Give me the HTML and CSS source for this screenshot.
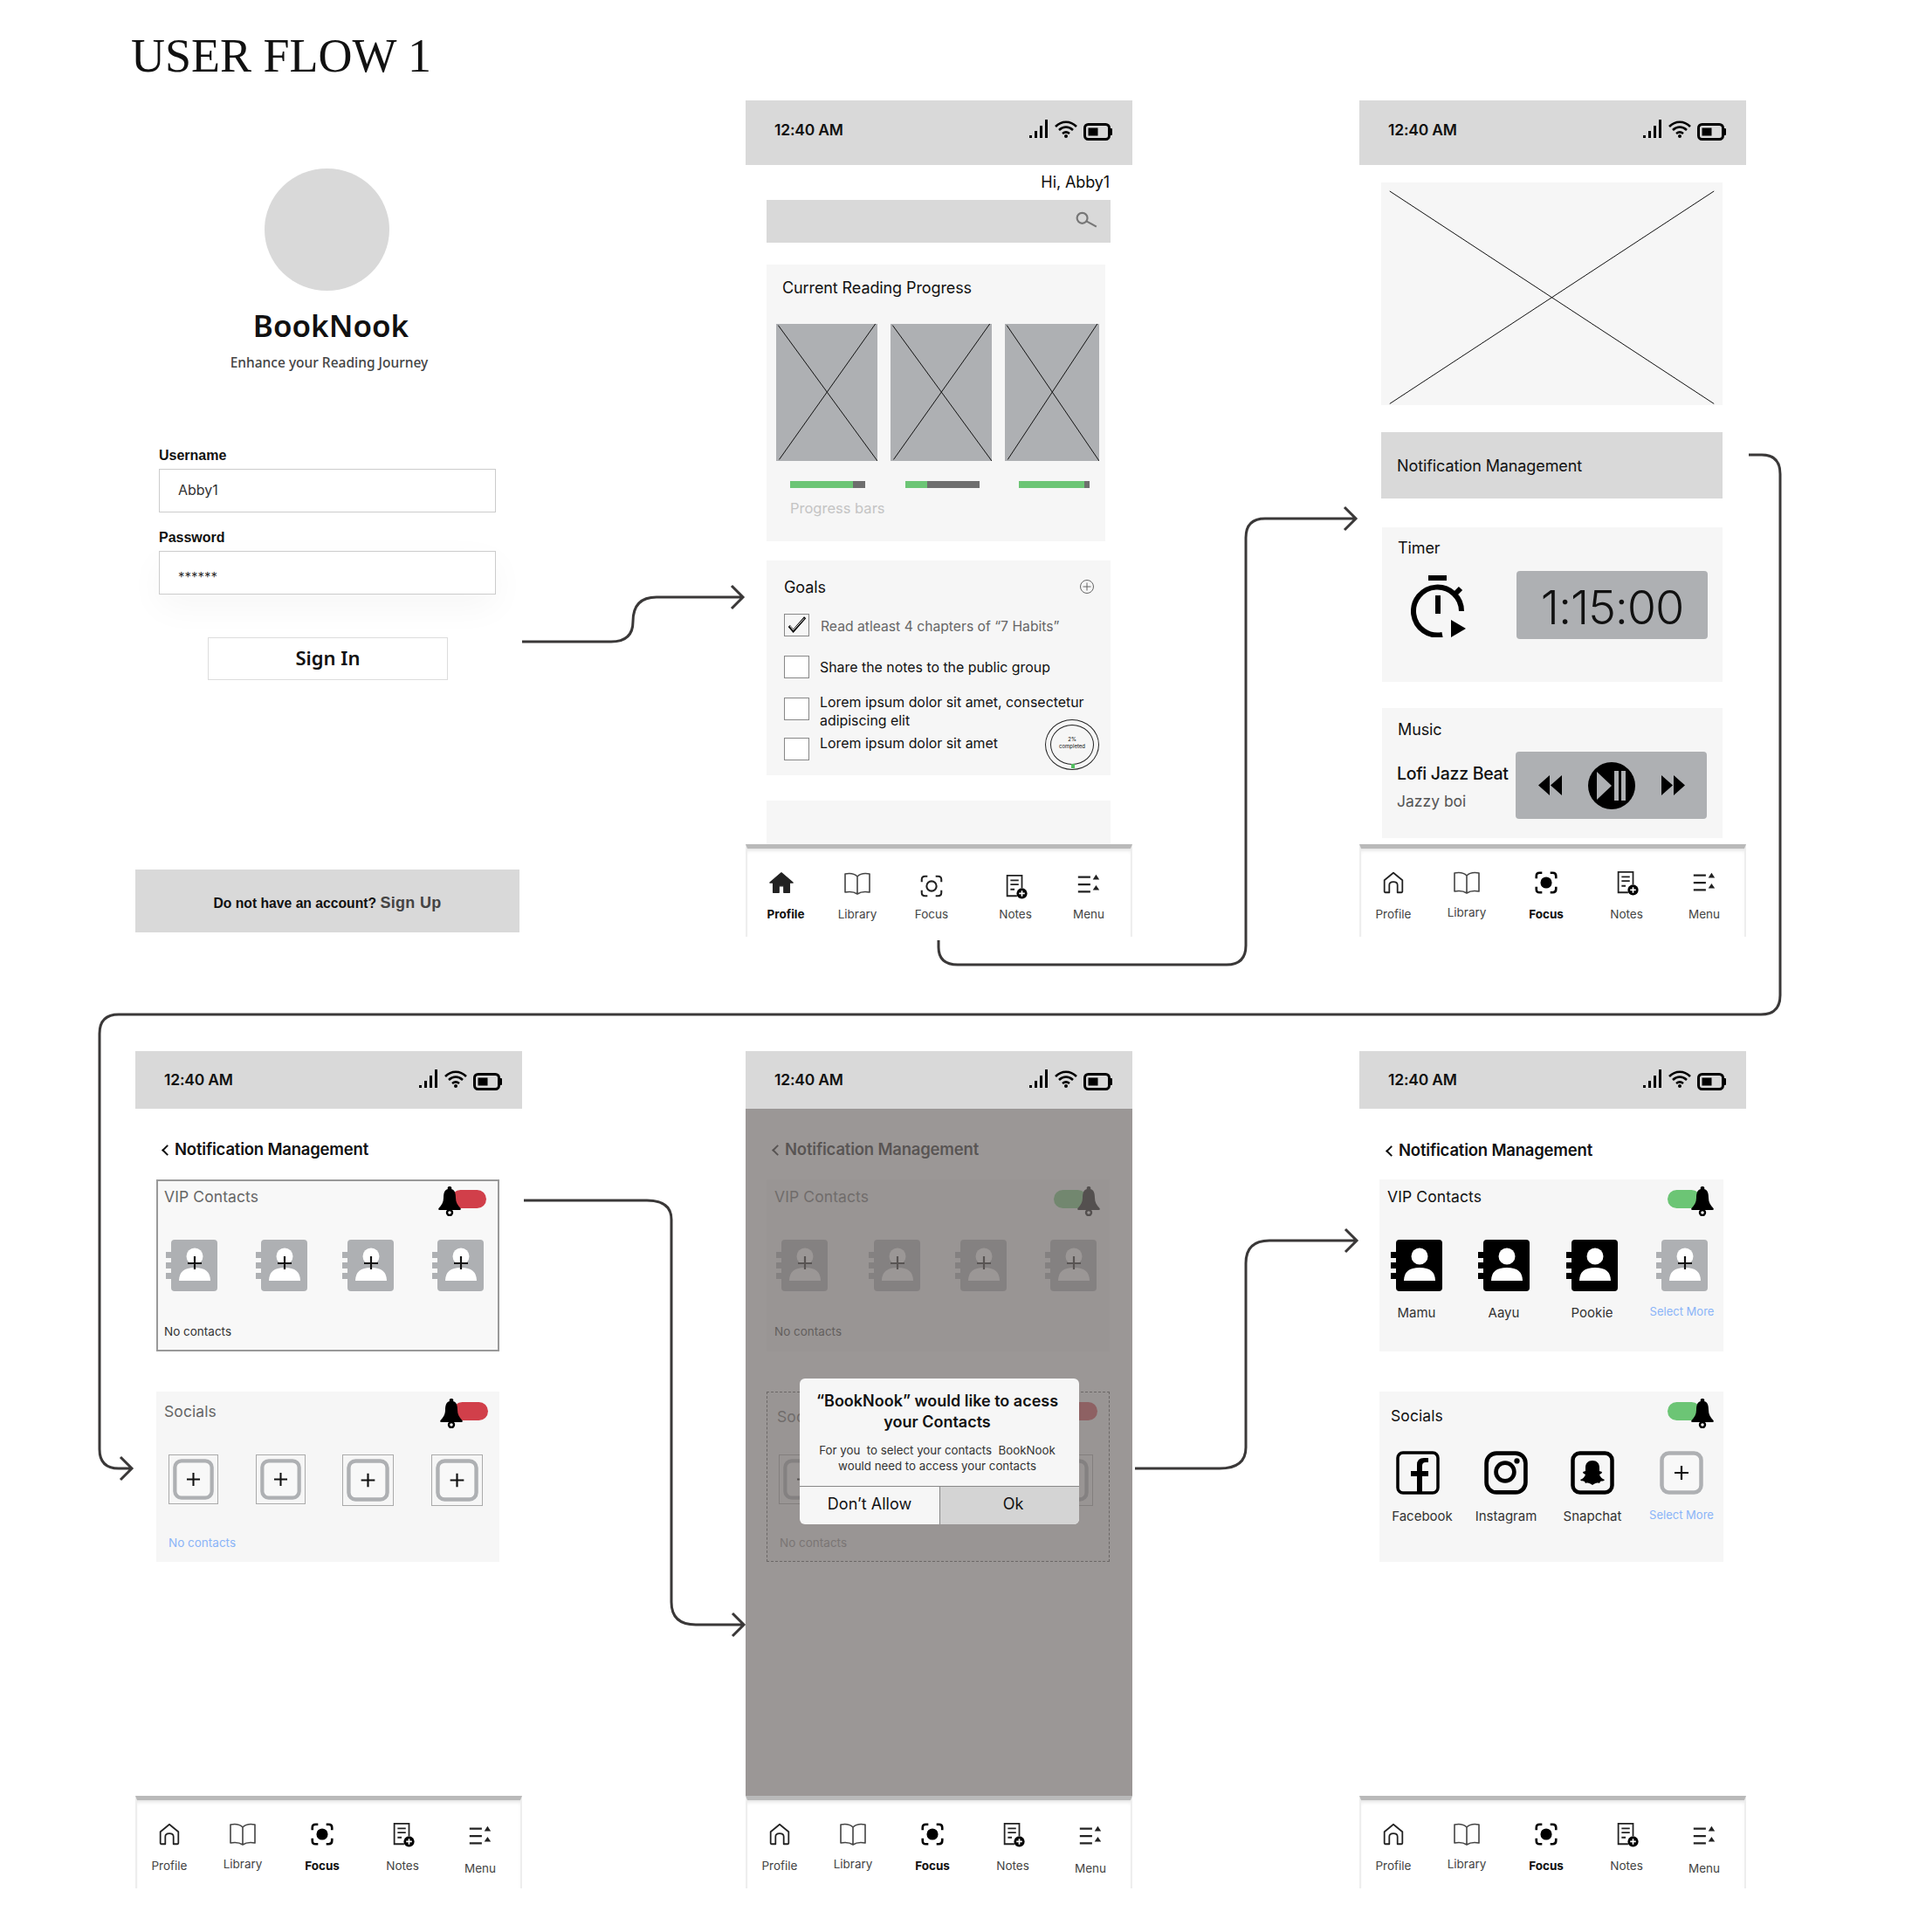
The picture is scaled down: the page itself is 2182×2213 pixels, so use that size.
FILE: index.html
```html
<!DOCTYPE html>
<html lang="en">
<head>
    <meta charset="UTF-8">
    <meta name="viewport" content="width=device-width, initial-scale=1.0">
    <title>User Flow 1</title>
    <link rel="stylesheet" href="styles.css">
</head>
<body>
<svg class="defs">
    <symbol id="signal" viewBox="0 0 22 22"><path d="M0 18h3v3H0zM6 13h3v8H6zM12 7h3v14h-3zM18 0h3v21h-3z"/></symbol>
    <symbol id="wifi" viewBox="0 0 26 20"><path d="M1 7c7-7 17-7 24 0M5 11c5-4.5 11-4.5 16 0M9 15c2.500-2 5.500-2 8 0" fill="none" stroke="#000" stroke-width="2.6"/><circle cx="13" cy="18" r="2"/></symbol>
    <symbol id="battery" viewBox="0 0 33 20"><rect x="1.5" y="1.5" width="28" height="17" rx="4" fill="none" stroke="#000" stroke-width="3"/><rect x="5.5" y="5.5" width="11" height="9"/><rect x="30" y="6" width="3" height="8" rx="1"/></symbol>
    <symbol id="home" viewBox="0 0 32 32"><path d="M5 27V13L16 4l11 9v14q0 1-1 1h-5v-9q0-4-5-4t-5 4v9H6q-1 0-1-1z" fill="none" stroke="#222" stroke-width="1.9" stroke-linejoin="round"/></symbol>
    <symbol id="home-fill" viewBox="0 0 32 32"><path d="M16 3l14 12h-4v12h-7v-8h-6v8H6V15H2z" fill="#222" stroke="#222" stroke-width="1.4" stroke-linejoin="round"/></symbol>
    <symbol id="book" viewBox="1 1 30 30"><path d="M16 8C13 5 7 4 2 5v21c5-1 11 0 14 2 3-2 9-3 14-2V5c-5-1-11 0-14 3zM16 8v20" fill="none" stroke="#444" stroke-width="1.6" stroke-linejoin="round"/></symbol>
    <symbol id="focus" viewBox="0 0 32 32"><path d="M4 11V8q0-4 4-4h3M21 4h3q4 0 4 4v3M28 21v3q0 4-4 4h-3M11 28H8q-4 0-4-4v-3" fill="none" stroke="#222" stroke-width="2.2"/><circle cx="16" cy="16" r="6" fill="none" stroke="#222" stroke-width="2.2"/></symbol>
    <symbol id="focus-on" viewBox="0 0 32 32"><path d="M4 11V8q0-4 4-4h3M21 4h3q4 0 4 4v3M28 21v3q0 4-4 4h-3M11 28H8q-4 0-4-4v-3" fill="none" stroke="#000" stroke-width="2.8"/><circle cx="16" cy="16" r="7"/></symbol>
    <symbol id="notes" viewBox="0 0 32 32"><path d="M24 18V3H6v25h12M10 9h10M10 14h10M10 20h5" fill="none" stroke="#222" stroke-width="1.9"/><circle cx="24" cy="25" r="6.5"/><path d="M24 21.500v7M20.500 25h7" stroke="#fff" stroke-width="1.8"/></symbol>
    <symbol id="menu" viewBox="0 0 32 32"><path d="M3 7h15M3 16h15M3 25h15" stroke="#222" stroke-width="2.4"/><path d="M25 4l4 6h-8zM25 17l4 6h-8z" fill="#222"/></symbol>
    <symbol id="bell" viewBox="0 0 26 34"><path d="M13 0a2 2 0 012 3c4 1 5 5 5 10 0 5 2 8 5.500 12q1 2-1 2H1.500q-2 0-1-2C4 21 6 18 6 13 6 8 7 4 11 3a2 2 0 012-3z"/><circle cx="13" cy="30" r="3" fill="none" stroke="#000" stroke-width="2.4"/></symbol>
    <symbol id="contact" viewBox="0 0 59 59"><path d="M0 14h10v7H0zM0 26h10v7H0zM0 38h10v7H0z"/><rect x="6" width="53" height="59" rx="4"/><circle cx="33" cy="19" r="9.5" fill="#fff"/><path d="M15 47q0-15 18-15t18 15z" fill="#fff"/></symbol>
    <symbol id="contact-add" viewBox="0 0 59 59"><path d="M0 14h10v7H0zM0 26h10v7H0zM0 38h10v7H0z" fill="#aeb0b3"/><rect x="6" width="53" height="59" rx="4" fill="#aeb0b3"/><circle cx="33" cy="19" r="9.5" fill="#fff"/><path d="M15 47q0-15 18-15t18 15z" fill="#fff"/><path d="M33 19v15M25 27h16" stroke="#111" stroke-width="2.2"/></symbol>
    <symbol id="add-tile" viewBox="0 0 50 50"><rect x="2.5" y="2.5" width="45" height="45" rx="8" fill="#f8f8f8" stroke="#aeb0b3" stroke-width="4.5"/><path d="M25 17v16M17 25h16" stroke="#111" stroke-width="2.2"/></symbol>
    <symbol id="facebook" viewBox="0 0 50 50"><rect x="2" y="2" width="46" height="46" rx="6" fill="none" stroke="#000" stroke-width="3.5"/><path d="M30 47V29h7v-6h-7v-6q0-4 4-4h3V8h-5q-8 0-8 8v7h-7v6h7v18z"/></symbol>
    <symbol id="instagram" viewBox="0 0 48 48"><rect x="2.5" y="2.5" width="43" height="43" rx="11" fill="none" stroke="#000" stroke-width="4.5"/><circle cx="23" cy="23" r="10" fill="none" stroke="#000" stroke-width="4.5"/><circle cx="36" cy="11" r="3"/></symbol>
    <symbol id="snapchat" viewBox="0 0 50 50"><rect x="2.5" y="2.5" width="45" height="45" rx="8" fill="none" stroke="#000" stroke-width="4.5"/><path d="M25 11c5 0 8 3 8 8v4l3 1c0 2-2 2-3 3 1 3 3 5 6 6-1 2-3 1-5 2l-1 2c-3-1-5 0-8 2-3-2-5-3-8-2l-1-2c-2-1-4 0-5-2 3-1 5-3 6-6-1-1-3-1-3-3l3-1v-4c0-5 3-8 8-8z"/></symbol>
    <symbol id="rewind" viewBox="0 0 27 23"><path d="M13 0v23L0 11.500zM27 0v23L14 11.500z"/></symbol>
    <symbol id="forward" viewBox="0 0 27 23"><path d="M0 0v23l13-11.500zM14 0v23l13-11.500z"/></symbol>
</svg>

<main class="board">
    <h1 class="flow-title">USER FLOW 1</h1>

    <!-- login -->
    <section class="login">
        <div class="logo"></div>
        <div class="brand">BookNook</div>
        <div class="tagline">Enhance your Reading Journey</div>
        <form class="login-form">
            <label class="field-label">Username</label>
            <div class="field">Abby1</div>
            <label class="field-label pass-label">Password</label>
            <div class="field field-pass">******</div>
            <div class="signin">Sign In</div>
        </form>
        <div class="signup-bar">Do not have an account? <span class="signup-link">Sign Up</span></div>
    </section>

    <!-- home -->
    <section class="phone phone-home">
        <div class="status">
            <span class="time">12:40 AM</span>
            <span class="status-icons"><svg class="i-signal"><use href="#signal"/></svg><svg class="i-wifi"><use href="#wifi"/></svg><svg class="i-battery"><use href="#battery"/></svg></span>
        </div>
        <div class="screen">
            <div class="hello">Hi, Abby1</div>
            <div class="search">
                <svg class="i-search" viewBox="0 0 24 18"><circle cx="7" cy="7" r="5.5" fill="none" stroke="#777" stroke-width="2"/><path d="M11 10l11 6" stroke="#777" stroke-width="2"/></svg>
            </div>
            <div class="card reading">
                <div class="card-title">Current Reading Progress</div>
                <div class="covers">
                    <div>
                        <div class="cover"><svg class="cross" viewBox="0 0 100 100" preserveAspectRatio="none"><path d="M2 1l98 99M98 0L3 99"/></svg></div>
                        <div class="bar bar-a"><div class="bar-fill" style="width:84%"></div></div>
                        <div class="bar-note">Progress bars</div>
                    </div>
                    <div>
                        <div class="cover"><svg class="cross" viewBox="0 0 100 100" preserveAspectRatio="none"><path d="M2 1l98 99M98 0L3 99"/></svg></div>
                        <div class="bar bar-b"><div class="bar-fill" style="width:29%"></div></div>
                    </div>
                    <div>
                        <div class="cover"><svg class="cross" viewBox="0 0 100 100" preserveAspectRatio="none"><path d="M2 1l98 99M98 0L3 99"/></svg></div>
                        <div class="bar bar-c"><div class="bar-fill" style="width:93%"></div></div>
                    </div>
                </div>
            </div>
            <div class="card goals">
                <div class="goals-head">
                    <span>Goals</span>
                    <svg class="i-plus-round" viewBox="0 0 18 18"><circle cx="9" cy="9" r="7.5" fill="none" stroke="#666" stroke-width="1"/><path d="M9 4.500v9M4.500 9h9" stroke="#666" stroke-width="1"/></svg>
                </div>
                <div class="goal">
                    <span class="check check-done"><svg viewBox="0 0 28 24"><path d="M5 13l5 6L24 3" fill="none" stroke="#000" stroke-width="3"/><path d="M6 13l4 5L23 4" fill="none" stroke="#f6f6f6" stroke-width="1"/></svg></span>
                    <span class="goal-text goal-done">Read atleast 4 chapters of “7 Habits”</span>
                </div>
                <div class="goal">
                    <span class="check"></span>
                    <span class="goal-text">Share the notes to the public group</span>
                </div>
                <div class="goal goal-wrap">
                    <span class="check"></span>
                    <span class="goal-text goal-up">Lorem ipsum dolor sit amet, consectetur<br>adipiscing elit</span>
                </div>
                <div class="goal">
                    <span class="check"></span>
                    <span class="goal-text goal-up-small">Lorem ipsum dolor sit amet</span>
                </div>
                <div class="ring">
                    <div class="ring-inner">2%<br>completed</div>
                    <span class="ring-tick"></span>
                </div>
            </div>
            <div class="card more"></div>
        </div>
        <nav class="nav nav-home">
            <a class="nav-item nav-on"><svg class="nav-icon"><use href="#home-fill"/></svg>Profile</a>
            <a class="nav-item"><svg class="nav-icon"><use href="#book"/></svg>Library</a>
            <a class="nav-item"><svg class="nav-icon"><use href="#focus"/></svg>Focus</a>
            <a class="nav-item"><svg class="nav-icon"><use href="#notes"/></svg>Notes</a>
            <a class="nav-item"><svg class="nav-icon"><use href="#menu"/></svg>Menu</a>
        </nav>
    </section>

    <!-- focus -->
    <section class="phone phone-focus">
        <div class="status">
            <span class="time">12:40 AM</span>
            <span class="status-icons"><svg class="i-signal"><use href="#signal"/></svg><svg class="i-wifi"><use href="#wifi"/></svg><svg class="i-battery"><use href="#battery"/></svg></span>
        </div>
        <div class="screen focus-screen">
            <div class="hero"><svg class="cross" viewBox="0 0 100 100" preserveAspectRatio="none"><path d="M2.500 3.900L97.500 99.400M97.500 3.900L2.500 99.400"/></svg></div>
            <div class="notif-bar">Notification Management</div>
            <div class="card timer">
                <div class="mini-title">Timer</div>
                <div class="timer-row">
                    <svg class="i-stopwatch" viewBox="0 0 63 71">
                        <rect x="20" width="21" height="6"/>
                        <path d="M58 41A27.500 27.500 0 1 0 36 68" fill="none" stroke="#000" stroke-width="6"/>
                        <rect x="28" y="23" width="6" height="21"/>
                        <path d="M50 22l7-7" stroke="#000" stroke-width="6"/>
                        <path d="M46 51l17 10-17 10z"/>
                    </svg>
                    <div class="clock">1:15:00</div>
                </div>
            </div>
            <div class="card music">
                <div class="mini-title">Music</div>
                <div class="music-row">
                    <div class="track">
                        <div class="track-name">Lofi Jazz Beat</div>
                        <div class="track-artist">Jazzy boi</div>
                    </div>
                    <div class="player">
                        <svg class="i-skip"><use href="#rewind"/></svg>
                        <svg class="i-playpause" viewBox="0 0 54 54"><circle cx="27" cy="27" r="27"/><path d="M10 11l17 16-17 16z" fill="#aeb0b3"/><path d="M30 10h5v34h-5zM38 10h5v34h-5z" fill="#aeb0b3"/></svg>
                        <svg class="i-skip"><use href="#forward"/></svg>
                    </div>
                </div>
            </div>
        </div>
        <nav class="nav">
            <a class="nav-item"><svg class="nav-icon"><use href="#home"/></svg>Profile</a>
            <a class="nav-item nav-lift"><svg class="nav-icon"><use href="#book"/></svg>Library</a>
            <a class="nav-item nav-on"><svg class="nav-icon"><use href="#focus-on"/></svg>Focus</a>
            <a class="nav-item"><svg class="nav-icon"><use href="#notes"/></svg>Notes</a>
            <a class="nav-item"><svg class="nav-icon"><use href="#menu"/></svg>Menu</a>
        </nav>
    </section>

    <!-- notification management, nothing picked -->
    <section class="phone phone-low phone-empty">
        <div class="status">
            <span class="time">12:40 AM</span>
            <span class="status-icons"><svg class="i-signal"><use href="#signal"/></svg><svg class="i-wifi"><use href="#wifi"/></svg><svg class="i-battery"><use href="#battery"/></svg></span>
        </div>
        <div class="screen">
            <div class="back-title"><span class="chevron"></span>Notification Management</div>
            <div class="card group group-outlined">
                <div class="group-head"><span class="group-name dim">VIP Contacts</span><span class="toggle toggle-off"><svg class="i-bell"><use href="#bell"/></svg></span></div>
                <div class="picks">
                    <svg class="i-contact"><use href="#contact-add"/></svg>
                    <svg class="i-contact"><use href="#contact-add"/></svg>
                    <svg class="i-contact"><use href="#contact-add"/></svg>
                    <svg class="i-contact"><use href="#contact-add"/></svg>
                </div>
                <div class="no-contacts">No contacts</div>
            </div>
            <div class="card group group-socials">
                <div class="group-head"><span class="group-name dim socials-low">Socials</span><span class="toggle toggle-off"><svg class="i-bell"><use href="#bell"/></svg></span></div>
                <div class="picks picks-add">
                    <span class="add-box"><svg class="i-add"><use href="#add-tile"/></svg></span>
                    <span class="add-box"><svg class="i-add"><use href="#add-tile"/></svg></span>
                    <span class="add-box add-box-big"><svg class="i-add"><use href="#add-tile"/></svg></span>
                    <span class="add-box add-box-big"><svg class="i-add"><use href="#add-tile"/></svg></span>
                </div>
                <div class="no-contacts no-contacts-blue">No contacts</div>
            </div>
        </div>
        <nav class="nav">
            <a class="nav-item"><svg class="nav-icon"><use href="#home"/></svg>Profile</a>
            <a class="nav-item nav-lift"><svg class="nav-icon"><use href="#book"/></svg>Library</a>
            <a class="nav-item nav-on"><svg class="nav-icon"><use href="#focus-on"/></svg>Focus</a>
            <a class="nav-item"><svg class="nav-icon"><use href="#notes"/></svg>Notes</a>
            <a class="nav-item nav-drop"><svg class="nav-icon"><use href="#menu"/></svg>Menu</a>
        </nav>
    </section>

    <!-- permission dialog -->
    <section class="phone phone-low phone-dialog">
        <div class="status">
            <span class="time">12:40 AM</span>
            <span class="status-icons"><svg class="i-signal"><use href="#signal"/></svg><svg class="i-wifi"><use href="#wifi"/></svg><svg class="i-battery"><use href="#battery"/></svg></span>
        </div>
        <div class="screen">
            <div class="back-title"><span class="chevron"></span>Notification Management</div>
            <div class="card group">
                <div class="group-head"><span class="group-name dim">VIP Contacts</span><span class="toggle toggle-on"><svg class="i-bell"><use href="#bell"/></svg></span></div>
                <div class="picks picks-wide">
                    <svg class="i-contact"><use href="#contact-add"/></svg>
                    <svg class="i-contact"><use href="#contact-add"/></svg>
                    <svg class="i-contact"><use href="#contact-add"/></svg>
                    <svg class="i-contact"><use href="#contact-add"/></svg>
                </div>
                <div class="no-contacts">No contacts</div>
            </div>
            <div class="card group group-socials group-dashed">
                <div class="group-head"><span class="group-name dim socials-dim">Socials</span><span class="toggle toggle-off"><svg class="i-bell"><use href="#bell"/></svg></span></div>
                <div class="picks picks-add">
                    <span class="add-box"><svg class="i-add"><use href="#add-tile"/></svg></span>
                    <span class="add-box"><svg class="i-add"><use href="#add-tile"/></svg></span>
                    <span class="add-box add-box-big"><svg class="i-add"><use href="#add-tile"/></svg></span>
                    <span class="add-box add-box-big"><svg class="i-add"><use href="#add-tile"/></svg></span>
                </div>
                <div class="no-contacts">No contacts</div>
            </div>
            <div class="scrim"></div>
            <div class="dialog">
                <div class="dialog-title">“BookNook” would like to acess<br>your Contacts</div>
                <div class="dialog-body">For you&nbsp; to select your contacts&nbsp; BookNook<br>would need to access your contacts</div>
                <div class="dialog-actions">
                    <span class="dialog-btn">Don’t Allow</span>
                    <span class="dialog-btn dialog-ok">Ok</span>
                </div>
            </div>
        </div>
        <nav class="nav">
            <a class="nav-item"><svg class="nav-icon"><use href="#home"/></svg>Profile</a>
            <a class="nav-item nav-lift"><svg class="nav-icon"><use href="#book"/></svg>Library</a>
            <a class="nav-item nav-on"><svg class="nav-icon"><use href="#focus-on"/></svg>Focus</a>
            <a class="nav-item"><svg class="nav-icon"><use href="#notes"/></svg>Notes</a>
            <a class="nav-item nav-drop"><svg class="nav-icon"><use href="#menu"/></svg>Menu</a>
        </nav>
    </section>

    <!-- contacts picked -->
    <section class="phone phone-low phone-picked">
        <div class="status">
            <span class="time">12:40 AM</span>
            <span class="status-icons"><svg class="i-signal"><use href="#signal"/></svg><svg class="i-wifi"><use href="#wifi"/></svg><svg class="i-battery"><use href="#battery"/></svg></span>
        </div>
        <div class="screen">
            <div class="back-title"><span class="chevron"></span>Notification Management</div>
            <div class="card group">
                <div class="group-head"><span class="group-name">VIP Contacts</span><span class="toggle toggle-on"><svg class="i-bell"><use href="#bell"/></svg></span></div>
                <div class="picks picks-named">
                    <div class="pick"><svg class="i-contact"><use href="#contact"/></svg><span class="pick-name">Mamu</span></div>
                    <div class="pick"><svg class="i-contact"><use href="#contact"/></svg><span class="pick-name">Aayu</span></div>
                    <div class="pick"><svg class="i-contact"><use href="#contact"/></svg><span class="pick-name">Pookie</span></div>
                    <div class="pick"><svg class="i-contact"><use href="#contact-add"/></svg><span class="pick-name select-more">Select More</span></div>
                </div>
            </div>
            <div class="card group group-socials">
                <div class="group-head"><span class="group-name socials-name">Socials</span><span class="toggle toggle-on"><svg class="i-bell"><use href="#bell"/></svg></span></div>
                <div class="picks picks-social">
                    <div class="pick pick-small"><svg class="i-social"><use href="#facebook"/></svg><span class="pick-name pick-fb">Facebook</span></div>
                    <div class="pick pick-small"><svg class="i-social"><use href="#instagram"/></svg><span class="pick-name">Instagram</span></div>
                    <div class="pick pick-small"><svg class="i-social"><use href="#snapchat"/></svg><span class="pick-name">Snapchat</span></div>
                    <div class="pick pick-small"><svg class="i-social"><use href="#add-tile"/></svg><span class="pick-name select-more">Select More</span></div>
                </div>
            </div>
        </div>
        <nav class="nav">
            <a class="nav-item"><svg class="nav-icon"><use href="#home"/></svg>Profile</a>
            <a class="nav-item nav-lift"><svg class="nav-icon"><use href="#book"/></svg>Library</a>
            <a class="nav-item nav-on"><svg class="nav-icon"><use href="#focus-on"/></svg>Focus</a>
            <a class="nav-item"><svg class="nav-icon"><use href="#notes"/></svg>Notes</a>
            <a class="nav-item nav-drop"><svg class="nav-icon"><use href="#menu"/></svg>Menu</a>
        </nav>
    </section>

    <!-- arrows between screens -->
    <svg class="arrows" viewBox="0 0 2182 2213">
        <path d="M598 735H700q25 0 25-23 0-28 27-28H850M838 671l13 13-13 13"/>
        <path d="M1075 1077v8q0 20 22 20H1405q22 0 22-22V616q0-22 22-22H1552M1540 581l13 13-13 13"/>
        <path d="M2003 521h15q21 0 21 22V1140q0 22-22 22H136q-22 0-22 22V1660q0 22 22 22H150M138 1669l13 13-13 13"/>
        <path d="M600 1375H741q28 0 28 22V1835q0 26 28 26H851M839 1848l13 13-13 13"/>
        <path d="M1300 1682h97q30 0 30-24V1447q0-26 27-26H1553M1541 1408l13 13-13 13"/>
    </svg>
</main>
</body>
</html>
```
FILE: styles.css
```css
* {
    box-sizing: border-box;
}
body {
    margin: 0;
    background: #fff;
    color: #111;
    font-family: Inter, "Noto Sans", sans-serif;
}
.defs {
    position: absolute;
    width: 0;
    height: 0;
}
.board {
    position: relative;
    width: 2182px;
    height: 2213px;
    overflow: hidden;
}
.flow-title {
    position: absolute;
    left: 150px;
    top: 31px;
    margin: 0;
    font-family: "Liberation Serif", serif;
    font-size: 54px;
    line-height: 66px;
    font-weight: 400;
    color: #111;
}
.arrows {
    position: absolute;
    left: 0;
    top: 0;
    width: 2182px;
    height: 2213px;
    fill: none;
    stroke: #3a3838;
    stroke-width: 3;
    pointer-events: none;
}

/* login */
.login {
    position: absolute;
    left: 155px;
    top: 193px;
    width: 440px;
    display: flex;
    flex-direction: column;
    align-items: center;
}
.logo {
    width: 143px;
    height: 140px;
    margin-left: -2px;
    border-radius: 50%;
    background: #d9d9d9;
}
.brand {
    margin: 16px 0 0 8px;
    font-family: "Noto Sans", sans-serif;
    font-size: 35px;
    line-height: 48px;
    font-weight: 600;
}
.tagline {
    margin: 8px 0 0 4px;
    font-family: "Noto Sans", sans-serif;
    font-size: 15.5px;
    line-height: 20px;
    font-weight: 500;
    color: #444;
}
.login-form {
    width: 100%;
    margin-top: 87px;
    display: flex;
    flex-direction: column;
    padding-left: 27px;
}
.field-label {
    font-family: "Liberation Sans", sans-serif;
    font-size: 16px;
    line-height: 20px;
    font-weight: 700;
}
.field {
    width: 386px;
    height: 50px;
    margin-top: 5px;
    padding: 0 21px;
    border: 1.5px solid #ccc;
    background: #fff;
    font-size: 16px;
    line-height: 47px;
    color: #333;
}
.pass-label {
    margin-top: 19px;
}
.field-pass {
    line-height: 58px;
    font-size: 15px;
    box-shadow: 0 14px 40px rgba(0, 0, 0, 0.04);
}
.signin {
    width: 275px;
    height: 49px;
    margin: 49px 0 0 56px;
    border: 1.5px solid #ddd;
    background: #fff;
    text-align: center;
    font-family: "Noto Sans", sans-serif;
    font-size: 22px;
    line-height: 44px;
    font-weight: 600;
}
.signup-bar {
    width: 100%;
    height: 72px;
    margin-top: 217px;
    background: #d9d9d9;
    text-align: center;
    font-family: "Liberation Sans", sans-serif;
    font-size: 15.7px;
    line-height: 76px;
    font-weight: 700;
}
.signup-link {
    font-size: 18px;
    color: #444;
    letter-spacing: 0.3px;
}

/* phones */
.phone {
    position: absolute;
    width: 443px;
    height: 958px;
    display: flex;
    flex-direction: column;
}
.phone-low {
    top: 1204px;
    height: 959px;
}
.phone-home {
    left: 854px;
    top: 115px;
}
.phone-focus {
    left: 1557px;
    top: 115px;
}
.phone-empty {
    left: 155px;
}
.phone-dialog {
    left: 854px;
}
.phone-picked {
    left: 1557px;
}
.status {
    flex: none;
    height: 74px;
    padding: 0 23px 8px 33px;
    display: flex;
    align-items: center;
    justify-content: space-between;
    background: #d9d9d9;
}
.phone-low .status {
    height: 66px;
    padding-bottom: 2px;
}
.time {
    font-size: 17.5px;
    font-weight: 600;
    letter-spacing: -0.2px;
}
.status-icons {
    display: flex;
    align-items: center;
    gap: 7px;
    margin-top: 2px;
}
.i-signal {
    width: 22px;
    height: 22px;
    margin-top: -2px;
}
.i-wifi {
    width: 26px;
    height: 20px;
    margin-top: -2px;
}
.i-battery {
    width: 33px;
    height: 20px;
    margin-top: 3px;
}
.screen {
    flex: 1;
    min-height: 0;
    position: relative;
    overflow: hidden;
}
.card {
    background: #f6f6f6;
}
.card-title,
.goals-head,
.mini-title,
.notif-bar,
.hello {
    font-size: 18px;
    letter-spacing: -0.1px;
}

/* bottom nav */
.nav {
    flex: none;
    height: 106px;
    display: grid;
    grid-template-columns: 74px 94px 88px 96px 82px;
    padding-top: 24px;
    border-top: 5px solid #b9b9b9;
    border-left: 2px solid #eee;
    border-right: 2px solid #eee;
    background: #fff;
    box-shadow: inset 0 4px 4px -2px rgba(0, 0, 0, 0.12);
}
.nav-home {
    grid-template-columns: 88px 76px 94px 98px 70px;
}
.nav-item {
    display: flex;
    flex-direction: column;
    align-items: center;
    font-size: 13.5px;
    line-height: 16px;
    color: #444;
}
.nav-on {
    color: #111;
    font-weight: 700;
}
.nav-icon {
    width: 30px;
    height: 30px;
    margin-bottom: 13px;
}
.nav-lift .nav-icon {
    margin-bottom: 11px;
}
.nav-drop .nav-icon {
    margin-top: 2px;
    margin-bottom: 14px;
}
.nav-home .nav-icon {
    margin-top: 1px;
    margin-bottom: 12px;
}
.nav-home .nav-on .nav-icon {
    margin-right: 10px;
}
.nav-home .nav-item:nth-child(3) .nav-icon,
.nav-home .nav-item:nth-child(4) .nav-icon {
    margin-top: 4px;
    margin-bottom: 9px;
}
.nav-home .nav-item:nth-child(5) .nav-icon {
    margin-top: 2px;
    margin-bottom: 11px;
}

/* home screen */
.hello {
    padding: 8px 26px 0 0;
    line-height: 24px;
    text-align: right;
}
.search {
    width: 394px;
    height: 49px;
    margin: 8px 0 0 24px;
    padding: 13px 14px 0 0;
    background: #d9d9d9;
    display: flex;
    justify-content: flex-end;
}
.i-search {
    width: 26px;
    height: 20px;
}
.reading {
    width: 388px;
    height: 317px;
    margin: 25px 0 0 24px;
    padding: 16px 11px 0;
}
.card-title {
    padding-left: 7px;
    line-height: 22px;
}
.covers {
    display: grid;
    grid-template-columns: 116px 116px 108px;
    gap: 15px;
    margin-top: 30px;
}
.cover {
    height: 157px;
    background: #aeb0b3;
}
.cross {
    display: block;
    width: 100%;
    height: 100%;
    fill: none;
    stroke: #111;
    stroke-width: 1;
}
.cross path {
    vector-effect: non-scaling-stroke;
}
.bar {
    height: 8px;
    margin-top: 23px;
    background: #6e6e6e;
}
.bar-a {
    width: 86px;
    margin-left: 16px;
}
.bar-b {
    width: 85px;
    margin-left: 17px;
}
.bar-c {
    width: 81px;
    margin-left: 16px;
}
.bar-fill {
    height: 100%;
    background: #6cc575;
}
.bar-note {
    margin: 12px 0 0 16px;
    font-size: 16.5px;
    line-height: 22px;
    color: #c4c4c4;
    white-space: nowrap;
}
.goals {
    position: relative;
    width: 394px;
    height: 246px;
    margin: 22px 0 0 24px;
    padding: 19px 20px 0;
}
.goals-head {
    display: flex;
    align-items: center;
    justify-content: space-between;
    height: 22px;
    margin-bottom: 20px;
}
.i-plus-round {
    width: 18px;
    height: 18px;
    margin-right: -2px;
}
.goal {
    display: flex;
    gap: 12px;
    height: 48px;
    font-size: 15.9px;
    line-height: 21px;
}
.goal-wrap {
    height: 46px;
}
.check {
    flex: none;
    width: 29px;
    height: 26px;
    border: 1.5px solid #888;
    background: #fff;
}
.check-done {
    background: #f6f6f6;
}
.check svg {
    display: block;
    width: 100%;
    height: 100%;
}
.goal-text {
    margin-top: 3px;
}
.goal-done {
    margin: 4px 0 0 1px;
    font-size: 15.7px;
    color: #666;
}
.goal-up {
    margin-top: -5px;
}
.goal-up-small {
    margin-top: -4px;
}
.ring {
    position: absolute;
    left: 319px;
    top: 182px;
    width: 62px;
    height: 58px;
    padding: 5px;
    border: 1.5px solid #222;
    border-radius: 50%;
    background: #f6f6f6;
}
.ring-inner {
    width: 100%;
    height: 100%;
    padding-top: 12px;
    border: 1.5px solid #222;
    border-radius: 50%;
    text-align: center;
    font-size: 6px;
    line-height: 8px;
}
.ring-tick {
    position: absolute;
    left: 29px;
    bottom: 1px;
    width: 4px;
    height: 5px;
    background: #54c062;
}
.more {
    width: 394px;
    height: 200px;
    margin: 29px 0 0 24px;
}

/* focus screen */
.hero {
    width: 391px;
    height: 255px;
    margin: 20px 0 0 25px;
    background: #f6f6f6;
}
.notif-bar {
    width: 391px;
    height: 76px;
    margin: 31px 0 0 25px;
    padding-left: 18px;
    background: #d9d9d9;
    line-height: 78px;
}
.timer {
    width: 390px;
    height: 177px;
    margin: 33px 0 0 26px;
    padding: 14px 0 0 18px;
}
.mini-title {
    line-height: 20px;
}
.timer-row {
    display: flex;
    margin-top: 16px;
}
.i-stopwatch {
    width: 63px;
    height: 71px;
    margin: 5px 58px 0 15px;
}
.clock {
    width: 219px;
    height: 78px;
    border-radius: 4px;
    background: #aeb0b3;
    text-align: center;
    font-size: 54px;
    line-height: 84px;
    font-weight: 300;
    letter-spacing: -1.2px;
}
.music {
    width: 390px;
    height: 149px;
    margin: 30px 0 0 26px;
    padding: 15px 0 0 18px;
}
.music-row {
    display: flex;
    margin-top: 15px;
}
.track {
    width: 136px;
    flex: none;
    margin-left: -1px;
    padding-top: 13px;
}
.track-name {
    font-size: 19.5px;
    line-height: 24px;
    font-weight: 500;
    letter-spacing: -0.3px;
    white-space: nowrap;
}
.track-artist {
    margin-top: 8px;
    font-size: 17.5px;
    line-height: 24px;
    color: #555;
}
.player {
    width: 219px;
    height: 77px;
    border-radius: 4px;
    background: #aeb0b3;
    display: flex;
    align-items: center;
    justify-content: center;
    gap: 30px;
}
.i-skip {
    width: 27px;
    height: 23px;
}
.i-playpause {
    width: 54px;
    height: 54px;
}

/* notification screens */
.back-title {
    position: relative;
    margin: 34px 0 0 45px;
    font-size: 18.5px;
    line-height: 24px;
    font-weight: 600;
    letter-spacing: -0.2px;
}
.chevron {
    position: absolute;
    left: -13px;
    top: 9px;
    width: 9px;
    height: 9px;
    border-left: 2px solid #111;
    border-bottom: 2px solid #111;
    transform: rotate(45deg);
}
.group {
    width: 393px;
    height: 197px;
    margin: 23px 0 0 24px;
    padding: 8px 0 0 9px;
}
.phone-picked .group {
    width: 394px;
    margin-left: 23px;
}
.phone-picked .back-title {
    margin-top: 35px;
    margin-bottom: -1px;
}
.group-outlined {
    border: 2px solid #999;
    padding: 6px 0 0 7px;
    background: #f8f8f8;
}
.group-socials {
    height: 195px;
    margin-top: 46px;
}
.group-dashed {
    border: 1px dashed #555;
    padding: 7px 0 0 8px;
}
.group-head {
    display: flex;
    align-items: flex-start;
    justify-content: space-between;
    height: 34px;
    padding-right: 14px;
}
.group-name {
    margin-top: 2px;
    font-size: 17.5px;
    line-height: 20px;
    letter-spacing: 0.1px;
}
.dim {
    color: #666;
}
.socials-name {
    margin: 10px 0 0 4px;
}
.socials-low {
    margin-top: 5px;
}
.socials-dim {
    margin: 11px 0 0 3px;
}
.toggle {
    position: relative;
    display: block;
    width: 55px;
    height: 34px;
    flex: none;
}
.toggle::before {
    content: "";
    position: absolute;
    top: 4px;
    height: 21px;
    border-radius: 11px;
}
.toggle-off {
    margin-right: -1px;
}
.toggle-off::before {
    left: 15px;
    width: 40px;
    background: #d13f4a;
}
.toggle-on {
    margin-right: -5px;
}
.toggle-on::before {
    left: 0;
    width: 38px;
    background: #6cc575;
}
.i-bell {
    position: absolute;
    top: 0;
    width: 26px;
    height: 34px;
}
.toggle-off .i-bell {
    left: 0;
}
.toggle-on .i-bell {
    left: 27px;
}
.picks {
    display: grid;
    grid-template-columns: 103px 99px 103px 59px;
    margin: 27px 0 0 2px;
}
.picks-wide {
    grid-template-columns: 106px 99px 103px 59px;
}
.i-contact {
    display: block;
    width: 59px;
    height: 59px;
}
.no-contacts {
    margin-top: 36px;
    font-size: 13.5px;
    line-height: 20px;
    color: #333;
}
.group-dashed .no-contacts {
    color: #8a8787;
    margin-left: 6px;
    margin-top: 32px;
}
.no-contacts-blue {
    margin: 32px 0 0 5px;
    color: #8ab4f8;
}
.picks-add {
    grid-template-columns: 100px 99px 102px 59px;
    margin: 30px 0 0 5px;
    align-items: start;
}
.add-box {
    display: block;
    width: 57px;
    height: 57px;
    padding: 4px 3px;
    border: 1px solid #aaa;
}
.add-box-big {
    width: 59px;
    height: 59px;
}
.i-add {
    display: block;
    width: 100%;
    height: 100%;
}
.picks-named {
    grid-template-columns: 100px 101px 103px 59px;
    margin: 27px 0 0 4px;
}
.pick {
    width: 59px;
    display: flex;
    flex-direction: column;
    align-items: center;
}
.pick-small {
    width: 50px;
}
.pick-name {
    margin-top: 15px;
    font-size: 15px;
    line-height: 20px;
    color: #333;
    white-space: nowrap;
}
.select-more {
    margin-top: 13px;
    font-size: 13px;
    color: #8ab4f8;
}
.picks-social {
    grid-template-columns: 101px 99px 102px 50px;
    margin: 26px 0 0 10px;
}
.pick-fb {
    margin-left: 10px;
}
.i-social {
    display: block;
    width: 50px;
    height: 50px;
}

/* dialog */
.scrim {
    position: absolute;
    inset: 0;
    background: rgba(116, 111, 109, 0.72);
}
.dialog {
    position: absolute;
    left: 62px;
    top: 309px;
    width: 320px;
    height: 167px;
    display: flex;
    flex-direction: column;
    border-radius: 6px;
    overflow: hidden;
    background: #f6f6f6;
    text-align: center;
}
.dialog-title {
    padding: 14px 5px 0 0;
    font-size: 18px;
    line-height: 24px;
    font-weight: 600;
}
.dialog-body {
    padding: 11px 5px 0 0;
    font-size: 13.3px;
    line-height: 18px;
    color: #333;
}
.dialog-actions {
    margin-top: auto;
    height: 44px;
    display: grid;
    grid-template-columns: 160px 160px;
    border-top: 1.5px solid #888;
}
.dialog-btn {
    font-size: 18px;
    line-height: 40px;
}
.dialog-ok {
    padding-left: 8px;
    border-left: 1.5px solid #888;
    background: #d4d4d4;
}
```
